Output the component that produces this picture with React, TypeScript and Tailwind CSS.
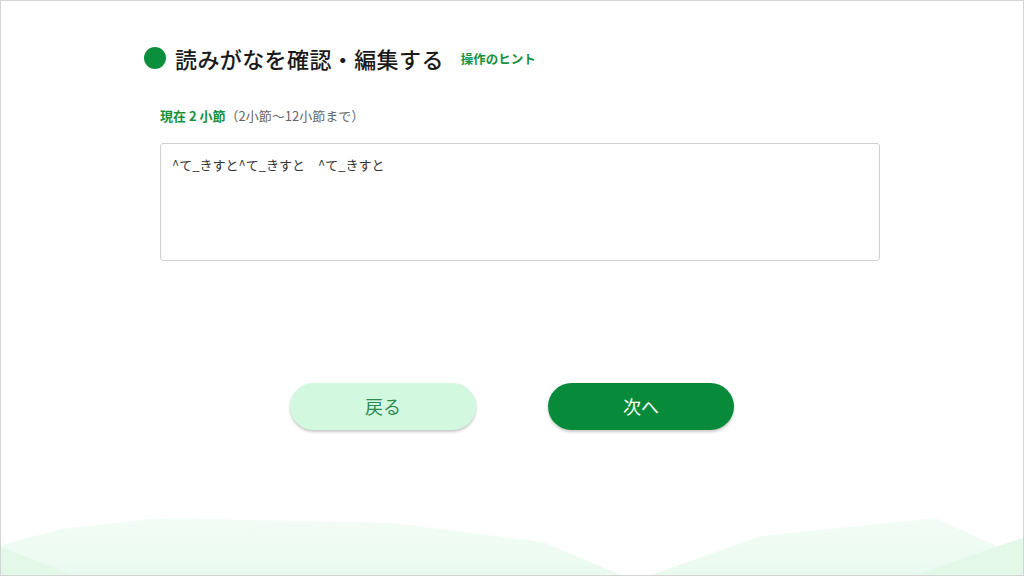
import React from "react";

const jp = { fontFamily: '"Noto Sans CJK JP", "Noto Sans", sans-serif' };

export default function App() {
  return (
    <div
      className="relative w-[1024px] h-[576px] overflow-hidden bg-white border border-[#d4d4d4]"
      style={jp}
    >
      <svg
        className="absolute left-0 bottom-0 w-[1024px] h-[70px]"
        viewBox="0 506 1024 70"
        preserveAspectRatio="none"
      >
        <defs>
          <linearGradient id="g1" x1="0" y1="0" x2="0" y2="1">
            <stop offset="0" stopColor="#f3fcf6" />
            <stop offset="1" stopColor="#eafaef" />
          </linearGradient>
        </defs>
        <polygon
          points="0,546 60,530 157,519 392,524 542,543 620,576 0,576"
          fill="url(#g1)"
        />
        <polygon points="650,576 760,537 934,519 1024,560 1024,576" fill="url(#g1)" />
        <polygon points="914,576 1024,538 1024,576" fill="#e3f8e9" />
        <polygon points="0,548 72,576 0,576" fill="#e4f8e9" />
      </svg>

      <div className="relative flex flex-col pl-[159px] pt-[46px]">
        <div className="flex items-center ml-[-16px] h-[22px]">
          <span className="w-[22px] h-[22px] rounded-full bg-[#0b8f3c]" />
          <h1 className="ml-[9px] text-[22px] leading-[22px] font-medium tracking-[0.4px] text-[#1a1a1a]">
            読みがなを確認・編集する
          </h1>
          <span className="ml-[17px] text-[12.5px] leading-[16px] font-bold text-[#16913c] mt-[1px]">
            操作のヒント
          </span>
        </div>

        <div className="mt-[38px] text-[13px] leading-[17px] text-[#666]">
          <span className="font-bold text-[#16913c]">現在 2 小節</span>
          <span>（2小節〜12小節まで）</span>
        </div>

        <div className="mt-[19px] w-[720px] h-[118px] rounded-[3px] border border-[#cfcfcf] pl-[11px] pt-[12px] text-[13px] leading-[18px] text-[#333] whitespace-pre">
          ^て_きすと^て_きすと　^て_きすと
        </div>
      </div>

      <div className="relative flex justify-center gap-[72px] mt-[122px]">
        <button className="w-[186px] h-[47px] rounded-full bg-[#d2f8e0] text-[#2b8a4e] text-[18px] shadow-[0_2px_3px_rgba(0,0,0,0.22)]">
          戻る
        </button>
        <button className="w-[186px] h-[47px] rounded-full bg-[#078b3b] text-white text-[18px] shadow-[0_2px_3px_rgba(0,0,0,0.22)]">
          次へ
        </button>
      </div>
    </div>
  );
}
